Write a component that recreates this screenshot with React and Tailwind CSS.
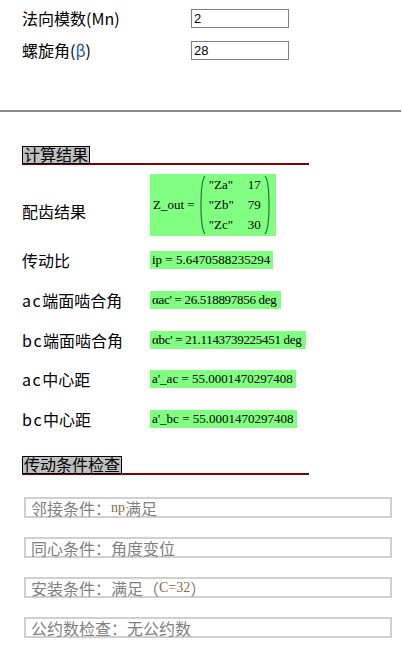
import React from 'react';

const cjk = { fontFamily: '"Noto Sans CJK SC", "DejaVu Sans", sans-serif' };
const serif = { fontFamily: '"Liberation Serif", "Times New Roman", serif' };
const sans = { fontFamily: '"Liberation Sans", Arial, sans-serif' };

const Heading = ({ children }) => (
  <div className="ml-[22px] w-[287px] h-[19px] flex items-start border-b-2 border-[#800000]">
    <span
      className="block h-[18px] px-[1px] bg-[#c0c0c0] border border-black text-[16px] leading-[15px] text-black"
      style={cjk}
    >
      {children}
    </span>
  </div>
);

const Paren = ({ flip }) => (
  <svg width="6" height="60" viewBox="0 0 6 60" className={flip ? 'scale-x-[-1]' : ''}>
    <path d="M5 1 Q1 6 1 30 Q1 54 5 59" fill="none" stroke="#2a6a4a" strokeWidth="1.2" />
  </svg>
);

const Lat = ({ children }) => <span className="tracking-[1.5px]">{children}</span>;

const ResultRow = ({ label, children, mt, w, tight }) => (
  <div className={`flex items-center ${mt}`}>
    <div className="w-[128px] ml-[22px] text-[16px] leading-[18px] text-black whitespace-nowrap" style={cjk}>
      {label}
    </div>
    <div
      className={`bg-[#80ff80] h-[18px] pl-[2px] pr-[1px] flex items-center text-[13px] text-black whitespace-nowrap ${w} ${tight ? 'tracking-[-0.3px]' : ''}`}
      style={serif}
    >
      {children}
    </div>
  </div>
);

const CondBox = ({ children, mt }) => (
  <div
    className={`ml-[24px] w-[368px] h-[21px] border-2 border-[#d0d0d0] pl-[5px] flex items-center text-[16px] text-[#808080] whitespace-nowrap ${mt}`}
    style={cjk}
  >
    {children}
  </div>
);

export default function App() {
  return (
    <div className="w-[402px] h-[657px] bg-white overflow-hidden">
      <div className="pt-[9px]">
        <div className="flex items-center h-[18px]">
          <div className="w-[169px] ml-[22px] text-[16px] text-black" style={cjk}>
            法向模数(Mn)
          </div>
          <div className="w-[98px] h-[19px] border border-[#808080] pl-[2px] text-[13px] leading-[17px] text-black" style={sans}>
            2
          </div>
        </div>
        <div className="flex items-center h-[18px] mt-[14px]">
          <div className="w-[169px] ml-[22px] text-[16px] text-black" style={cjk}>
            螺旋角(<span className="text-[#1a50c0]">β</span>)
          </div>
          <div className="w-[98px] h-[19px] border border-[#808080] pl-[2px] text-[13px] leading-[17px] text-black" style={sans}>
            28
          </div>
        </div>
      </div>

      <div className="mt-[51px] h-[2px] w-[401px] bg-[#888888]" />

      <div className="mt-[34px]">
        <Heading>计算结果</Heading>
      </div>

      <div className="flex items-center mt-[9px]">
        <div className="w-[128px] ml-[22px] mt-[12px] text-[16px] text-black" style={cjk}>
          配齿结果
        </div>
        <div
          className="bg-[#80ff80] h-[62px] w-[126px] pl-[3px] flex items-center text-[13px] text-black"
          style={serif}
        >
          <span className="mr-[5px]">Z_out =</span>
          <Paren />
          <div className="grid grid-cols-[auto_auto] gap-x-[14px] gap-y-[4px] px-[3px] leading-[16px]">
            <span>"Za"</span>
            <span className="text-right">17</span>
            <span>"Zb"</span>
            <span className="text-right">79</span>
            <span>"Zc"</span>
            <span className="text-right">30</span>
          </div>
          <Paren flip />
        </div>
      </div>

      <ResultRow label="传动比" mt="mt-[15px]" w="min-w-[123px]">ip = 5.6470588235294</ResultRow>
      <ResultRow label={<><Lat>ac</Lat>端面啮合角</>} mt="mt-[22px]" w="min-w-[131px]" tight>αac' = 26.518897856 deg</ResultRow>
      <ResultRow label={<><Lat>bc</Lat>端面啮合角</>} mt="mt-[22px]" w="min-w-[156px]" tight>αbc' = 21.1143739225451 deg</ResultRow>
      <ResultRow label={<><Lat>ac</Lat>中心距</>} mt="mt-[21px]" w="min-w-[146px]">a'_ac = 55.0001470297408</ResultRow>
      <ResultRow label={<><Lat>bc</Lat>中心距</>} mt="mt-[22px]" w="min-w-[147px]">a'_bc = 55.0001470297408</ResultRow>

      <div className="mt-[28px]">
        <Heading>传动条件检查</Heading>
      </div>

      <CondBox mt="mt-[22px]">
        邻接条件：<span className="text-[#8a6a40] text-[14px]" style={serif}>np</span>满足
      </CondBox>
      <CondBox mt="mt-[19px]">同心条件：角度变位</CondBox>
      <CondBox mt="mt-[19px]">
        安装条件：满足（<span className="text-[#8a6a40] text-[14px]" style={serif}>C=32</span>）
      </CondBox>
      <CondBox mt="mt-[19px]">公约数检查：无公约数</CondBox>
    </div>
  );
}
